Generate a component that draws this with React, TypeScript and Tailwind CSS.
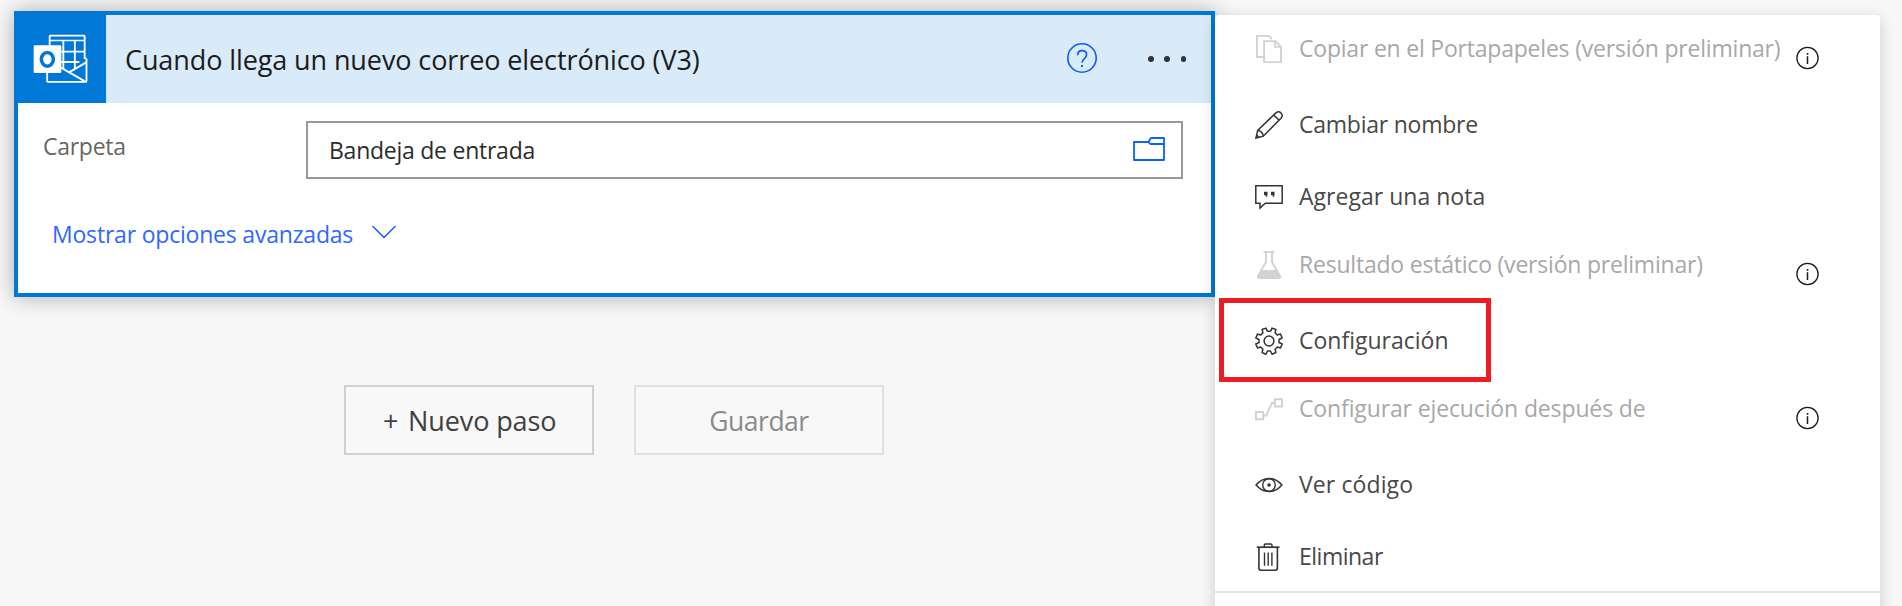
import type { ReactNode } from "react";

function OutlookLogo() {
  return (
    <svg width="56" height="50" viewBox="99 101 168 150" fill="none">
      <g stroke="#fff" strokeWidth="5.5">
        <path d="M149 136V108q0-2 2-2H252q2 0 2 2V176" />
        <path d="M149 120.500H254" strokeWidth="5" />
        <path d="M190 120V206M224.500 120V204M183 154H254M183 185H238" />
        <path d="M141.500 216V242q0 2.500 2.500 2.500H257q2.500 0 2.500-2.500V175" />
        <path d="M252 174L260 174" strokeWidth="4" />
        <path d="M183 202L255 243M207 216L259 186" />
      </g>
      <rect x="101" y="135" width="83" height="83" rx="4" fill="#fff" />
      <ellipse cx="142" cy="177" rx="18" ry="20.500" stroke="#0078d7" strokeWidth="10.500" />
    </svg>
  );
}

function HelpIcon() {
  return (
    <svg width="32" height="32" viewBox="0 0 32 32" fill="none" stroke="#0a5cff">
      <circle cx="16" cy="16" r="14.200" strokeWidth="1.600" />
      <path d="M11.700 13.200c0-2.900 1.900-4.500 4.400-4.500s4.400 1.600 4.400 4.100c0 1.900-1 2.900-2.300 4-1.300 1.100-2.100 1.900-2.100 3.900" strokeWidth="1.700" />
      <path d="M16 23v2" strokeWidth="2" />
    </svg>
  );
}

function FolderIcon() {
  return (
    <svg width="32" height="24" viewBox="0 0 32 24" fill="none" stroke="#0a62ff" strokeWidth="1.800" strokeLinejoin="round">
      <path d="M1 5H15.500L17.300 1.700Q17.700 1 18.500 1H31V23H1Z" />
      <path d="M15.500 5l1.400 1.600Q17.300 7 18 7H31" />
    </svg>
  );
}

function InfoIcon() {
  return (
    <svg width="24" height="24" viewBox="0 0 24 24" fill="none" stroke="#1a1a1a">
      <circle cx="11.500" cy="12" r="10.600" strokeWidth="1.300" />
      <path d="M11.500 10.200V18" strokeWidth="1.500" />
      <path d="M11.500 7V8.700" strokeWidth="1.700" />
    </svg>
  );
}

function Icon({ muted, children }: { muted?: boolean; children: ReactNode }) {
  return (
    <svg
      width="28"
      height="28"
      viewBox="0 0 28 28"
      fill="none"
      stroke="currentColor"
      strokeWidth="1.500"
      className={muted ? "shrink-0 text-[#d2d2d2]" : "shrink-0 text-[#333]"}
    >
      {children}
    </svg>
  );
}

const copyIcon = (
  <Icon muted>
    <path d="M8.500 22H1.900V.900H13.800L17 4" strokeWidth="1.900" />
    <path d="M9.100 6.100H20.500L26 11.800V27.100H9.100Z" strokeWidth="1.900" />
    <path d="M20 6.500V11.800H26" strokeWidth="1.700" />
  </Icon>
);

const pencilIcon = (
  <Icon>
    <path d="M.900 27.100L2.700 19.400L20.900 1.900Q23.700-.300 26 2Q28.300 4.400 26.200 7L8.300 25.200Z" />
    <path d="M18.700 4L24.100 9.300M2.900 19.300Q7.600 20.500 8.300 25.100M1.700 24L4 26.400" />
  </Icon>
);

const noteIcon = (
  <Icon>
    <path d="M.800 2.800H27.200V20.200H10.300L5 25V20.200H.800Z" />
    <path d="M9 8.800h3.500v3.400q0 1.600-1.700 1.900l-.400-.500q.800-.500.800-1.300h-2.200zM16 8.800h3.500v3.400q0 1.600-1.700 1.900l-.400-.500q.800-.500.800-1.300h-2.200z" fill="currentColor" stroke="none" />
  </Icon>
);

const flaskIcon = (
  <Icon muted>
    <path d="M8.500 1H19.500" strokeWidth="1.900" />
    <path d="M11 1V11L3 25Q2.500 27 4.500 27H23.500Q25.500 27 25 25L17 11V1" strokeWidth="1.900" />
    <path d="M6.500 19H21.500L26 25Q26.500 28 23.500 28H4.500Q1.500 28 2 25Z" fill="currentColor" stroke="none" />
  </Icon>
);

const gearIcon = (
  <Icon>
    <circle cx="14" cy="14" r="4.900" />
    <path
      d="M12.300 4.100L14 4.300L15.700 4.100L17 1.100L20.900 2.500L20.100 5.700L22.300 7.900L25.500 7.100L27.200 11L24 12.500V15.500L27.200 17L25.500 20.900L22.300 20.100L20.100 22.300L20.900 25.500L17 27.200L15.500 24H12.500L11 27.200L7.100 25.500L7.900 22.300L5.700 20.100L2.500 20.900L.800 17L4 15.500V12.500L.800 11L2.500 7.100L5.700 7.900L7.900 5.700L7.100 2.500L11 1.100Z"
      strokeLinejoin="round"
    />
  </Icon>
);

const flowIcon = (
  <Icon muted>
    <path d="M1 17H8.200V24.200H1ZM19.800 4.200H27V11.400H19.800Z" strokeWidth="2" />
    <path d="M8.500 20.500H11.200L17 8H19.500" strokeWidth="1.900" />
  </Icon>
);

const eyeIcon = (
  <Icon>
    <path d="M1.100 14Q6.500 7.500 14 7.500T26.900 14Q21.500 20.500 14 20.500T1.100 14Z" />
    <circle cx="14" cy="14" r="6.300" strokeWidth="1.400" />
    <circle cx="14" cy="14" r="1.800" fill="currentColor" stroke="none" />
  </Icon>
);

const trashIcon = (
  <Icon>
    <path d="M1.800 4.200H24.500" strokeWidth="1.700" />
    <path d="M9.300 4V2.200Q9.300.900 10.600.900H15.700Q17 .900 17 2.200V4" />
    <path d="M3.900 4.500V25Q3.900 27.200 6 27.200H20.300Q22.400 27.200 22.400 25V4.500" strokeWidth="1.600" />
    <path d="M9.500 9.500V22.800M13.200 9.500V22.800M16.900 9.500V22.800" strokeWidth="1.400" />
  </Icon>
);

type Item = { label: string; icon: ReactNode; row: string; text: string; disabled?: boolean };

const items: Item[] = [
  { label: "Copiar en el Portapapeles (versión preliminar)", icon: copyIcon, row: "h-[72px]", text: "tracking-[-0.21px]", disabled: true },
  { label: "Cambiar nombre", icon: pencilIcon, row: "h-[72px]", text: "tracking-[-0.24px]" },
  { label: "Agregar una nota", icon: noteIcon, row: "h-[72px]", text: "tracking-[0.02px]" },
  { label: "Resultado estático (versión preliminar)", icon: flaskIcon, row: "h-[72px]", text: "tracking-[-0.21px]", disabled: true },
  { label: "Configuración", icon: gearIcon, row: "h-[72px]", text: "tracking-normal" },
  { label: "Configurar ejecución después de", icon: flowIcon, row: "h-[72px]", text: "tracking-[-0.13px]", disabled: true },
  { label: "Ver código", icon: eyeIcon, row: "h-[72px]", text: "tracking-[0.11px]" },
  { label: "Eliminar", icon: trashIcon, row: "h-[70px] pt-0.5", text: "tracking-[-0.5px]" },
];

function MenuItem({ item }: { item: Item }) {
  return (
    <li className={`flex items-center pl-10 pr-[60px] ${item.row}`}>
      <span className={`flex flex-1 items-center gap-4 ${item.disabled ? "pb-2 text-[#a8a8a8]" : "text-[#484848]"}`}>
        {item.icon}
        <span className={`whitespace-nowrap pb-0.5 leading-8 ${item.text}`}>{item.label}</span>
      </span>
      {item.disabled && (
        <span className="pt-2.5">
          <InfoIcon />
        </span>
      )}
    </li>
  );
}

export default function App() {
  return (
    <div className="relative flex h-[606px] w-[1902px] items-start overflow-hidden bg-[#f7f7f7] font-['Open_Sans','Noto_Sans',sans-serif] text-[23px]">
      <main className="ml-3.5 mt-[11px] w-[1201px]">
        <section className="h-[286px] border-4 border-[#0078d7] bg-white shadow-[0_0_20px_rgba(0,0,0,0.3)]">
          <header className="flex h-[88px] items-center bg-[#d9eaf8]">
            <div className="flex size-[88px] items-center bg-[#0078d7] pl-[15px]">
              <OutlookLogo />
            </div>
            <h1 className="flex-1 whitespace-nowrap pl-[19px] pt-0.5 text-[27px] leading-9 tracking-[-0.1px] text-[#1c1c1c]">
              Cuando llega un nuevo correo electrónico (V3)
            </h1>
            <button className="pb-0.5">
              <HelpIcon />
            </button>
            <button className="ml-12 mr-[23px] flex w-[42px] justify-between px-0.5">
              <span className="size-[5.500px] rounded-full bg-[#333]" />
              <span className="size-[5.500px] rounded-full bg-[#333]" />
              <span className="size-[5.500px] rounded-full bg-[#333]" />
            </button>
          </header>
          <div className="flex pl-[25px] pr-7 pt-[18px]">
            <label className="w-[263px] pt-[9px] leading-8 tracking-[-0.27px] text-[#666]">Carpeta</label>
            <div className="flex h-[58px] flex-1 items-center justify-between border-2 border-[#999] pl-[21px] pr-4">
              <span className="leading-8 tracking-[-0.25px] text-[#2b2b2b]">Bandeja de entrada</span>
              <span className="pb-0.5">
                <FolderIcon />
              </span>
            </div>
          </div>
          <button className="ml-[34px] mt-[39px] flex items-center gap-[19px] leading-8 tracking-[-0.2px] text-[#3068ff]">
            Mostrar opciones avanzadas
            <svg width="24" height="14" viewBox="0 0 24 14" fill="none" stroke="#0a5cff" strokeWidth="1.400" className="-mt-1">
              <path d="M.500 1L12 12.500L23.500 1" />
            </svg>
          </button>
        </section>
        <div className="ml-[330px] mt-[88px] flex gap-10">
          <button className="flex h-[70px] w-[250px] items-center border-2 border-[#d0d0d0] bg-[#f8f8f8] pl-[37px] pt-0.5 text-[27px] leading-9 tracking-[-0.1px] text-[#404040]">
            <span className="w-[25px] text-left">+</span>
            <span className="whitespace-nowrap">Nuevo paso</span>
          </button>
          <button className="flex h-[70px] w-[250px] items-center justify-center border-2 border-[#e0e0e0] bg-[#f8f8f8] pt-0.5 text-[26.500px] leading-9 tracking-[-0.5px] text-[#8a8a8a]">
            Guardar
          </button>
        </div>
      </main>
      <nav className="z-10 mt-[15px] h-[640px] w-[665px] rounded-[4px] bg-white pt-0.5 shadow-[0_4px_16px_rgba(0,0,0,0.18)]">
        <ul className="border-b-2 border-[#e5e5e5]">
          {items.map((item) => (
            <MenuItem key={item.label} item={item} />
          ))}
        </ul>
      </nav>
      <div className="pointer-events-none absolute left-[1219px] top-[298px] z-20 h-[84px] w-[272px] border-5 border-[#ee1c25]" />
    </div>
  );
}
